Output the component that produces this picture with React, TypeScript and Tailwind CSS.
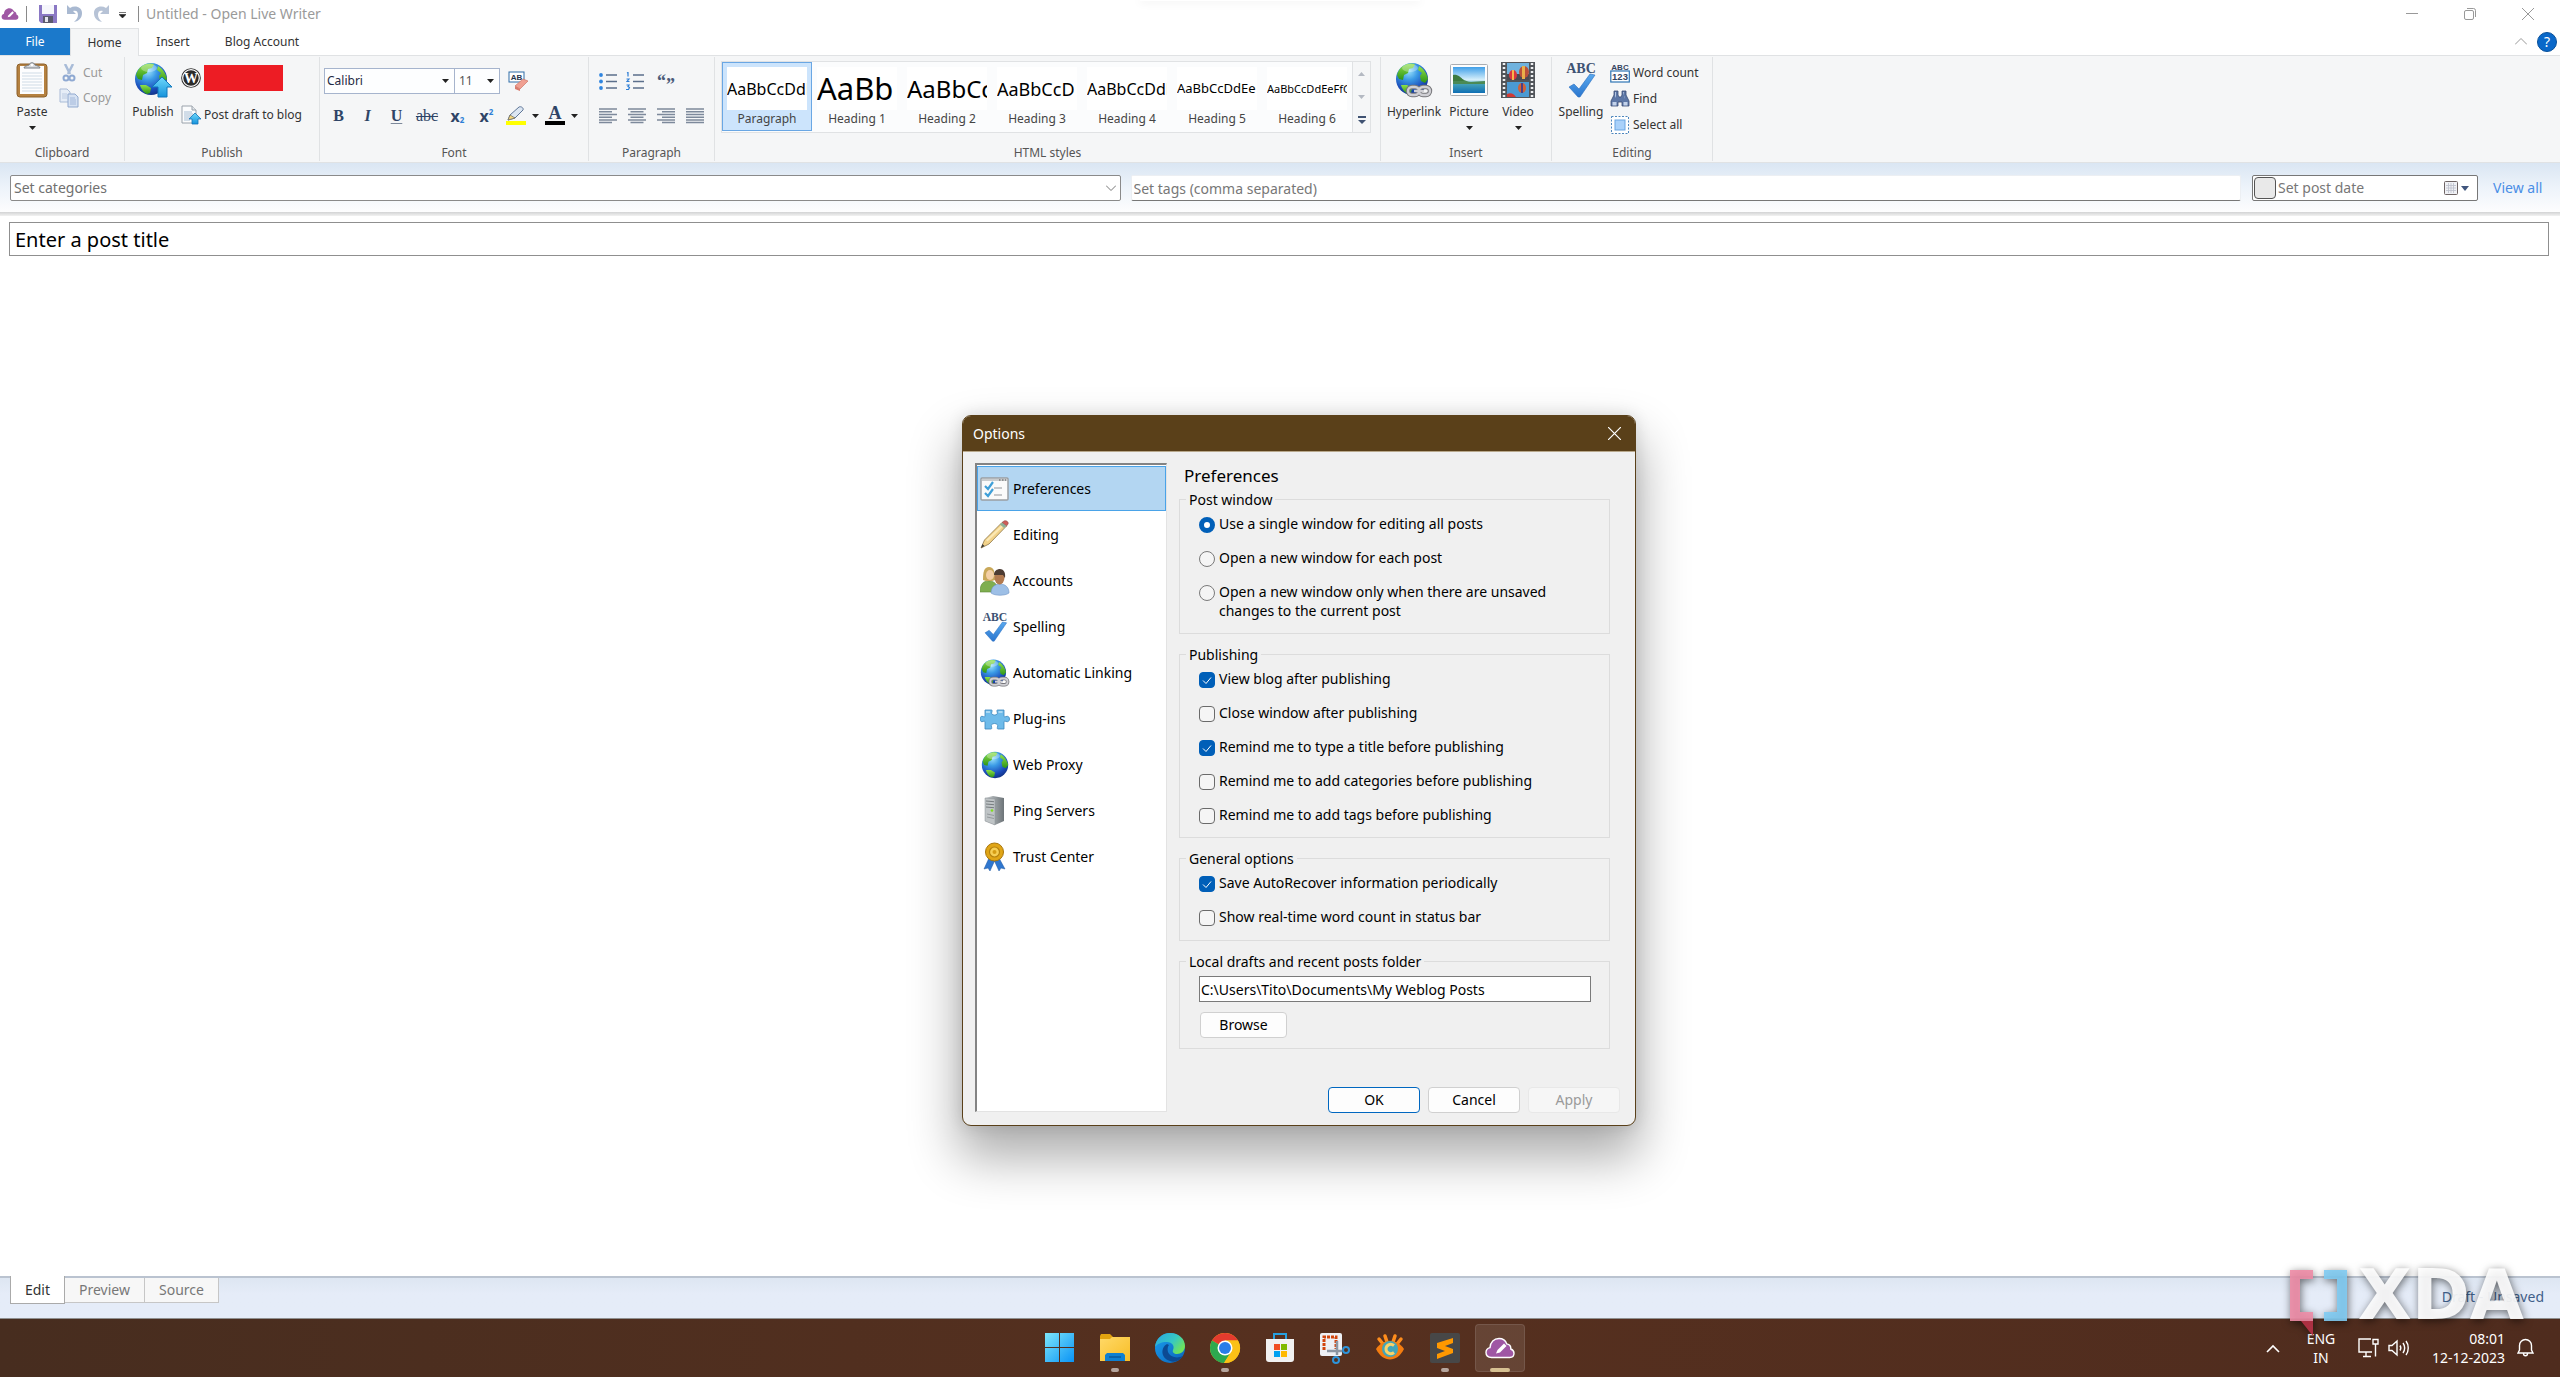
import { useState } from "react";
import type { ReactNode } from "react";

function Defs() {
  return (
    <svg className="absolute size-0" aria-hidden="true">
      <defs>
        <radialGradient id="sea" cx="0.4" cy="0.25" r="0.8">
          <stop offset="0" stopColor="#9fe4fb" />
          <stop offset="0.35" stopColor="#3b9be6" />
          <stop offset="0.75" stopColor="#1a49b8" />
          <stop offset="1" stopColor="#10307e" />
        </radialGradient>
        <linearGradient id="land" x1="0" y1="0" x2="0" y2="1">
          <stop offset="0" stopColor="#8fe04a" />
          <stop offset="1" stopColor="#2d9416" />
        </linearGradient>
        <linearGradient id="arrowBlue" x1="0" y1="0" x2="0" y2="1">
          <stop offset="0" stopColor="#6fd8fb" />
          <stop offset="1" stopColor="#1593dc" />
        </linearGradient>
        <linearGradient id="tick" x1="0" y1="0" x2="0" y2="1">
          <stop offset="0" stopColor="#5aa9ee" />
          <stop offset="1" stopColor="#2a76cf" />
        </linearGradient>
        <linearGradient id="win" x1="0" y1="0" x2="1" y2="1">
          <stop offset="0" stopColor="#7de6fb" />
          <stop offset="1" stopColor="#0a93f5" />
        </linearGradient>
        <linearGradient id="folder" x1="0" y1="0" x2="1" y2="1">
          <stop offset="0" stopColor="#ffd968" />
          <stop offset="1" stopColor="#f8bd25" />
        </linearGradient>
        <linearGradient id="edgeTop" x1="0" y1="0" x2="1" y2="0.6">
          <stop offset="0" stopColor="#2aa5e0" />
          <stop offset="0.6" stopColor="#36c8c4" />
          <stop offset="1" stopColor="#6fe35a" />
        </linearGradient>
        <linearGradient id="edgeLow" x1="0" y1="0" x2="1" y2="1">
          <stop offset="0" stopColor="#1a9ff0" />
          <stop offset="1" stopColor="#0b63b8" />
        </linearGradient>
        <linearGradient id="sky" x1="0" y1="0" x2="0" y2="1">
          <stop offset="0" stopColor="#3f9fe8" />
          <stop offset="0.5" stopColor="#d9f1fb" />
          <stop offset="0.62" stopColor="#4aa6b8" />
          <stop offset="1" stopColor="#0f6fb4" />
        </linearGradient>
        <linearGradient id="metal" x1="0" y1="0" x2="1" y2="0">
          <stop offset="0" stopColor="#c9ced1" />
          <stop offset="1" stopColor="#6d7478" />
        </linearGradient>
      </defs>
    </svg>
  );
}

function GlobeShape() {
  return (
    <>
      <circle cx="17" cy="17" r="16" fill="url(#sea)" />
      <path d="M8 4c4-3 9-3 12-2l-2 4-4 1-1 4-4 2-1 5-4-1-2-4c1-4 3-7 6-9z" fill="url(#land)" />
      <path d="M24 4c5 3 8 8 9 13l-3 4-4-2-1-5 2-3-4-3z" fill="url(#land)" />
      <path d="M6 23l6 0 5 3-1 5-3 1c-3-1-6-5-7-9z" fill="url(#land)" />
      <ellipse cx="15" cy="6" rx="8" ry="4" fill="#fff" opacity="0.3" />
    </>
  );
}

function Globe({ className }: { className: string }) {
  return (
    <svg className={className} viewBox="0 0 34 34" aria-hidden="true">
      <GlobeShape />
    </svg>
  );
}

function LinkedGlobe({ className }: { className: string }) {
  return (
    <svg className={className} viewBox="0 0 38 36" aria-hidden="true">
      <GlobeShape />
      <g fill="none" stroke="#77777b" strokeWidth="4.4">
        <rect x="13" y="25" width="11" height="8" rx="4" />
        <rect x="24" y="25" width="11" height="8" rx="4" />
      </g>
      <g fill="none" stroke="#cfcfd4" strokeWidth="2.4">
        <rect x="13" y="25" width="11" height="8" rx="4" />
        <rect x="24" y="25" width="11" height="8" rx="4" />
        <path d="M19 29h10" />
      </g>
    </svg>
  );
}

function PublishGlobe() {
  return (
    <svg className="h-9 w-[38px]" viewBox="0 0 38 36" aria-hidden="true">
      <GlobeShape />
      <path d="M28 15l10 10h-5v10h-9V25h-6z" fill="url(#arrowBlue)" stroke="#0f77bd" />
    </svg>
  );
}

function AbcTick({ className }: { className: string }) {
  return (
    <svg className={className} viewBox="0 0 32 36" aria-hidden="true">
      <text x="16" y="11" textAnchor="middle" fontFamily="Liberation Serif, serif" fontWeight="700" fontSize="14" fill="#3d5273">ABC</text>
      <path d="M4 25l5-3 5 5 11-15 5 1-15 22h-2z" fill="url(#tick)" stroke="#2a6fc0" strokeWidth="0.6" />
    </svg>
  );
}

function CloudMark({ className, ring }: { className: string; ring?: boolean }) {
  return (
    <svg className={className} viewBox="0 0 30 22" aria-hidden="true">
      <path
        d="M6.500 20.500C3 20.500 1 18.300 1 15.500c0-2.500 1.700-4.400 4-4.900C5.300 5.300 9 1.500 14 1.500c3.800 0 6.700 2.200 7.700 5.400 2.600.4 4.300 2.400 4.100 5.100 2 .8 3.200 2.500 3.200 4.300 0 2.500-1.800 4.200-4.200 4.200z"
        fill="#9f57a4"
        stroke={ring ? "#fff" : "none"}
        strokeWidth="1.400"
      />
      <path d="M11 16.500l1.500-3.500 6.500-6.500 2.500 2.500-6.500 6.500z" fill="#fff" />
    </svg>
  );
}

function Caret({ className = "" }: { className?: string }) {
  return (
    <svg className={"h-1 w-[7px] " + className} viewBox="0 0 7 4" aria-hidden="true">
      <path d="M0 0h7L3.500 4z" fill="#222" />
    </svg>
  );
}

function ClipboardIcon() {
  return (
    <svg className="h-9 w-8" viewBox="0 0 32 36" aria-hidden="true">
      <rect x="1" y="2" width="30" height="33" rx="3" fill="#b58140" stroke="#8d602a" />
      <rect x="4" y="4" width="24" height="28" fill="#fdfdfe" />
      <path d="M6 11h20M6 14h20M6 17h20M6 20h20M6 23h20M6 26h20M6 29h20" stroke="#cfdbe6" />
      <path d="M8 6c0-2 3-2 5-3 1-3 5-3 6 0 2 1 5 1 5 3z" fill="#d7dade" stroke="#777c82" />
      <circle cx="16" cy="3" r="1.300" fill="#fff" />
    </svg>
  );
}

function ScissorsIcon() {
  return (
    <svg className="h-[18px] w-5" viewBox="0 0 20 18" aria-hidden="true">
      <path d="M6 0l5 10M14 0L9 10" stroke="#a9bcd8" strokeWidth="2.500" />
      <circle cx="7" cy="14" r="2.500" fill="none" stroke="#8fa9d2" strokeWidth="2" />
      <circle cx="13" cy="14" r="2.500" fill="none" stroke="#8fa9d2" strokeWidth="2" />
    </svg>
  );
}

function CopyIcon() {
  return (
    <svg className="h-5 w-5" viewBox="0 0 20 20" aria-hidden="true">
      <path d="M1 1h7l3 3v10H1z" fill="#e6edf7" stroke="#a9bbd6" />
      <path d="M3 6h5M3 8h5M3 10h5" stroke="#bccbe2" />
      <path d="M9 6h7l3 3v10H9z" fill="#d5e1f2" stroke="#91a9cf" />
      <path d="M11 10h5M11 12h6M11 14h6M11 16h6" stroke="#a3b8da" />
    </svg>
  );
}

function WordPressIcon() {
  return (
    <svg className="size-5" viewBox="0 0 20 20" aria-hidden="true">
      <circle cx="10" cy="10" r="9.800" fill="#2b2b2b" />
      <circle cx="10" cy="10" r="8.300" fill="none" stroke="#fff" strokeWidth="1.200" />
      <text x="10" y="15" textAnchor="middle" fontFamily="Liberation Serif, serif" fontWeight="700" fontSize="14" fill="#fff">W</text>
    </svg>
  );
}

function DraftIcon() {
  return (
    <svg className="size-5" viewBox="0 0 20 20" aria-hidden="true">
      <path d="M1 1h10l4 4v13H1z" fill="#fbfcfd" stroke="#9aa2ab" />
      <path d="M11 1v4h4" fill="#e2e6ea" stroke="#9aa2ab" />
      <path d="M3 7h8M3 9h9M3 11h8M3 13h6M3 15h6" stroke="#a7bdd3" />
      <path d="M14 8l6 6h-3v5h-6v-5H8z" fill="url(#arrowBlue)" stroke="#1274b8" strokeWidth="0.800" />
    </svg>
  );
}

function ClearFormatIcon() {
  return (
    <svg className="size-5" viewBox="0 0 20 20" aria-hidden="true">
      <rect x="1" y="1" width="15" height="10" fill="#fff" stroke="#2e6da8" />
      <text x="8.500" y="9" textAnchor="middle" fontFamily="Liberation Sans, sans-serif" fontWeight="700" fontSize="8" fill="#27364f">AB</text>
      <path d="M7 15l8-7 5 2-8 8z" fill="#f0a092" stroke="#cf7567" strokeWidth="0.700" />
      <path d="M7 15l5 3v2l-5-2z" fill="#d97b6d" />
    </svg>
  );
}

function HighlighterIcon() {
  return (
    <svg className="size-5" viewBox="0 0 20 20" aria-hidden="true">
      <path d="M2 14l2-5L13 1c2-1 5 1 4 3L9 12z" fill="#dce6f2" stroke="#5f7697" />
      <path d="M2 14l2-5 5 3z" fill="#f4d77c" stroke="#6f6a5a" strokeWidth="0.700" />
      <rect y="15" width="20" height="4" fill="#ff0" />
    </svg>
  );
}

function FontColourIcon() {
  return (
    <svg className="size-5" viewBox="0 0 20 20" aria-hidden="true">
      <text x="10" y="13" textAnchor="middle" fontFamily="Liberation Serif, serif" fontWeight="700" fontSize="18" fill="#2f4466">A</text>
      <rect y="15" width="20" height="4" fill="#000" />
    </svg>
  );
}

function ListIcon({ numbered }: { numbered?: boolean }) {
  return (
    <svg className="size-[18px]" viewBox="0 0 18 18" aria-hidden="true">
      <path d="M7 3h11M7 9.500h11M7 16h11" stroke="#5b6f8c" strokeWidth="1.300" />
      {numbered ? (
        <path d="M1 1l1-.5v4M.500 7h2.500l-2 2.500h2.500M.500 13h2.500l-1 1.500 1.500 1-1 2H0" fill="none" stroke="#2f7fd6" strokeWidth="1.200" />
      ) : (
        <g fill="#2f85e0">
          <circle cx="2" cy="3" r="1.900" />
          <circle cx="2" cy="9.500" r="1.900" />
          <circle cx="2" cy="16" r="1.900" />
        </g>
      )}
    </svg>
  );
}

const ALIGN_PATHS: Record<string, string> = {
  left: "M0 1h18M0 6.500h18M0 12h18M0 3.800h13M0 9.200h13M0 14.500h13",
  center: "M0 1h18M0 6.500h18M0 12h18M2.500 3.800h13M2.500 9.200h13M2.500 14.500h13",
  right: "M0 1h18M0 6.500h18M0 12h18M5 3.800h13M5 9.200h13M5 14.500h13",
  justify: "M0 1h18M0 6.500h18M0 12h18M0 3.800h18M0 9.200h18M0 14.500h18",
};

function AlignIcon({ kind }: { kind: string }) {
  return (
    <svg className="h-4 w-[18px]" viewBox="0 0 18 16" aria-hidden="true">
      <path d={ALIGN_PATHS[kind]} stroke="#7d899b" strokeWidth="1.500" />
    </svg>
  );
}

function PictureIcon() {
  return (
    <svg className="h-9 w-[38px]" viewBox="0 0 38 36" aria-hidden="true">
      <rect x="0.500" y="2.500" width="37" height="31" rx="1" fill="#fdfdfd" stroke="#a9adb2" />
      <rect x="3" y="5" width="32" height="26" fill="url(#sky)" />
      <path d="M3 16c6-3 10 3 18 4l14-1v3H3z" fill="#4b8a55" />
      <path d="M3 13c4-1 8 2 11 6H3z" fill="#3d7a3f" />
    </svg>
  );
}

function VideoIcon() {
  return (
    <svg className="h-9 w-[34px]" viewBox="0 0 34 36" aria-hidden="true">
      <rect width="34" height="36" fill="#51555a" />
      <rect x="6" y="1" width="22" height="17" fill="#6fb2de" />
      <rect x="6" y="20" width="22" height="15" fill="#4b9ad2" />
      <path d="M6 12h22v6H6z" fill="#4b4a52" />
      <ellipse cx="12" cy="13" rx="4" ry="5" fill="#d8373e" />
      <path d="M11 8h2v10h-2z" fill="#f6b54a" />
      <ellipse cx="23" cy="10" rx="5" ry="6" fill="#b9503a" />
      <path d="M21 4h3v13h-3z" fill="#e8b04a" />
      <ellipse cx="21" cy="26" rx="4" ry="5" fill="#d06238" />
      <path d="M20 21h2v10h-2z" fill="#4d3f86" />
      <path d="M6 35v-3c4-2 7 0 9 3z" fill="#d03a35" />
      <path d="M3 1v34M31 1v34" stroke="#eef0f2" strokeWidth="2.500" strokeDasharray="2 2" />
    </svg>
  );
}

function WordCountIcon() {
  return (
    <svg className="size-5" viewBox="0 0 20 20" aria-hidden="true">
      <text x="10" y="6.500" textAnchor="middle" fontFamily="Liberation Sans, sans-serif" fontWeight="700" fontSize="8" fill="#33445f">ABC</text>
      <rect x="0.800" y="8" width="18.500" height="11" fill="#fff" stroke="#2e75b5" strokeWidth="1.200" />
      <text x="10" y="17" textAnchor="middle" fontFamily="Liberation Sans, sans-serif" fontWeight="700" fontSize="9.500" fill="#33445f">123</text>
    </svg>
  );
}

function BinocularsIcon() {
  return (
    <svg className="size-5" viewBox="0 0 20 20" aria-hidden="true">
      <path d="M4 2h4v4l1 2h2l1-2V2h4v4l3 6v5h-7v-4H8v4H1v-5l3-6z" fill="#5d77a6" stroke="#3a4d73" strokeWidth="0.800" />
      <path d="M2.500 13h4v3.500h-4zM13.500 13h4v3.500h-4z" fill="#c3d2ea" />
      <path d="M5 3h1v4l-1 2zM13 3h1v5l1 2z" fill="#b4c5e2" />
    </svg>
  );
}

function SelectAllIcon() {
  return (
    <svg className="size-5" viewBox="0 0 20 20" aria-hidden="true">
      <rect x="1.500" y="1.500" width="17" height="17" fill="#fff" stroke="#4e86bd" strokeDasharray="2 1.500" />
      <rect x="5" y="5" width="10" height="10" fill="#a9d1fa" stroke="#6aa6e2" />
    </svg>
  );
}

function PreferencesIcon() {
  return (
    <svg className="size-[30px]" viewBox="0 0 30 30" aria-hidden="true">
      <rect x="1" y="4" width="27" height="22" rx="1" fill="#fafafa" stroke="#9b9fa3" strokeWidth="1.500" />
      <path d="M2 6h25" stroke="#c9ccce" strokeWidth="2" />
      <path d="M19 6h1.500M22 6h1.500M25 6h1" stroke="#555" />
      <path d="M5 12l3 3 5-7M5 19l3 3 5-7" fill="none" stroke="#3f9fd8" strokeWidth="2.200" />
      <path d="M14 14h8M14 21h8" stroke="#b4b7bb" strokeWidth="1.500" />
    </svg>
  );
}

function PencilIcon() {
  return (
    <svg className="size-[30px]" viewBox="0 0 30 30" aria-hidden="true">
      <path d="M1 28l3.500-8L22 2.500l4.500 3.500L9 24z" fill="#f3d38a" stroke="#8b7445" strokeWidth="0.800" />
      <path d="M6 20L23 4l1.500 1L7.500 21.500z" fill="#fbe9b7" />
      <path d="M22 2.500l2-1.500c2-1 5 1 4 3l-1.500 2z" fill="#cf5d5a" stroke="#8c4845" strokeWidth="0.600" />
      <path d="M20 4.500l2-2 4.500 3.500L24 8z" fill="#8fb09a" />
      <path d="M1 28l1.500-4 2 2z" fill="#3a3a3a" />
    </svg>
  );
}

function PeopleIcon() {
  return (
    <svg className="size-[30px]" viewBox="0 0 30 30" aria-hidden="true">
      <path d="M0 26c0-8 3-11 9-11s9 4 9 11z" fill="#7fae4f" stroke="#5c8836" strokeWidth="0.600" />
      <path d="M3 14c0-8 1-13 6-13s6 5 6 13l-3 1H6z" fill="#c9a85a" />
      <ellipse cx="10" cy="9" rx="4" ry="5" fill="#f3cfa6" />
      <path d="M11 27c0-6 4-9 9-9s9 3 9 9c-4 3-14 3-18 0z" fill="#9dbfe6" stroke="#6e94c4" strokeWidth="0.600" />
      <ellipse cx="19.500" cy="11.500" rx="5" ry="7" fill="#b27a50" />
      <path d="M14 9c0-4 3-6 6-6s6 3 5 9l-2-3z" fill="#4d3c33" />
    </svg>
  );
}

function PuzzleIcon() {
  return (
    <svg className="size-[30px]" viewBox="0 0 30 30" aria-hidden="true">
      <path
        d="M5 6h6.500c.8 0 .8 1 .3 2C11 10 12.500 11 14.500 11s3.500-1 2.700-3c-.5-1-.5-2 .3-2H24v6c0 1 .8 1 2 .500 2-.8 3.500.5 3.500 2.500s-1.500 3.300-3.500 2.500c-1.200-.5-2-.5-2 .5v7h-6c-.8 0-1-1-.5-2 .8-2-.5-3.500-3-3.500s-3.800 1.500-3 3.500c.5 1 .3 2-.5 2H5v-7c0-1-.8-1-2-.5-1.700.8-3-.5-3-2.500s1.300-3.300 3-2.500c1.200.5 2 .5 2-.5z"
        fill="#6ebbea"
        stroke="#3a86bd"
        strokeWidth="0.800"
      />
      <path d="M6 8h4M18.500 8h4" stroke="#bfe3f8" strokeWidth="1.500" />
    </svg>
  );
}

function ServerIcon() {
  return (
    <svg className="size-[30px]" viewBox="0 0 30 30" aria-hidden="true">
      <path d="M5 2l8-2 11 2v23l-9 4-10-4z" fill="url(#metal)" />
      <path d="M5 2l10 1v26L5 25z" fill="#bfc4c6" stroke="#8b9194" strokeWidth="0.500" />
      <path d="M6 5l8 .700M6 8l8 .700M6 11l8 .700" stroke="#777d80" />
      <circle cx="12" cy="14.500" r="1.300" fill="#7fe01a" />
      <path d="M7 18l7 1.500M7 21l7 1.500" stroke="#94999c" />
    </svg>
  );
}

function MedalIcon() {
  return (
    <svg className="size-[30px]" viewBox="0 0 30 30" aria-hidden="true">
      <path d="M9 16L4 27l4-1 2 3 5-11zM19 16l6 11-4-1-2 3-5-11z" fill="#2f77cf" stroke="#1f56a0" strokeWidth="0.500" />
      <circle cx="14.500" cy="10" r="9" fill="#e0a516" stroke="#a8750a" />
      <circle cx="14.500" cy="10" r="5" fill="#f7cf55" stroke="#b5820e" strokeWidth="1.200" />
      <circle cx="14.500" cy="10" r="2" fill="#d59c14" />
    </svg>
  );
}

function Group({ label, className = "", children }: { label: string; className?: string; children: ReactNode }) {
  return (
    <section aria-label={label} className={"my-px flex h-[104px] flex-none flex-col border-r border-[#e0e2e4] pt-[3px] " + className}>
      <div className="flex flex-1 items-start">{children}</div>
      <h2 className="text-center text-xs leading-4 font-normal text-[#555]">{label}</h2>
    </section>
  );
}

function BigButton({ label, icon, menu, className }: { label: string; icon: ReactNode; menu?: boolean; className: string }) {
  return (
    <button className={"flex flex-col items-center " + className}>
      <span className="flex h-10 items-center">{icon}</span>
      <span className="mt-1 leading-4">{label}</span>
      {menu && <Caret className="mt-[6px]" />}
    </button>
  );
}

function SmallButton({ label, icon, className = "" }: { label: string; icon: ReactNode; className?: string }) {
  return (
    <button className={"flex h-[26px] items-center gap-[3px] whitespace-nowrap " + className}>
      {icon}
      <span>{label}</span>
    </button>
  );
}

const STYLES = [
  { name: "Paragraph", sample: "AaBbCcDdE", size: "text-base" },
  { name: "Heading 1", sample: "AaBb", size: "text-[31px]" },
  { name: "Heading 2", sample: "AaBbCc", size: "text-2xl" },
  { name: "Heading 3", sample: "AaBbCcD", size: "text-lg" },
  { name: "Heading 4", sample: "AaBbCcDdE", size: "text-base" },
  { name: "Heading 5", sample: "AaBbCcDdEe", size: "text-[13px]" },
  { name: "Heading 6", sample: "AaBbCcDdEeFfG", size: "text-[11px]" },
];

function TitleBar() {
  return (
    <header className="relative flex h-7 flex-none items-center pl-px text-[#9a9a9a]">
      <div className="absolute top-0 left-1/2 h-px w-[280px] -translate-x-1/2 shadow-[0_0_8px_rgba(0,0,0,0.25)]" />
      <CloudMark className="h-4 w-[18px]" />
      <span className="ml-[7px] h-4 w-px bg-[#8a8a8a]" />
      <button aria-label="Save" className="ml-3">
        <svg className="size-[18px]" viewBox="0 0 18 18" aria-hidden="true">
          <path d="M0 0h18v18H2l-2-2z" fill="#8a78c4" />
          <rect x="3" width="12" height="9" fill="#f5f6fb" />
          <rect x="4" y="11" width="10" height="7" fill="#5a5a6e" />
          <rect x="6" y="12" width="3" height="5" fill="#e5e6ee" />
        </svg>
      </button>
      <button aria-label="Undo" className="ml-[9px]">
        <svg className="size-[18px]" viewBox="0 0 18 18" aria-hidden="true">
          <path d="M1 0v9h9L7 6c3-1 5 0 5 4 0 3-2 5-4 7 5-1 8-4 8-9 0-6-7-8-12-5z" fill="#a9b9d1" />
        </svg>
      </button>
      <button aria-label="Redo" className="ml-2">
        <svg className="size-[18px]" viewBox="0 0 18 18" aria-hidden="true">
          <path d="M17 0v9H8l3-3c-3-1-5 0-5 4 0 3 2 5 4 7-5-1-8-4-8-9 0-6 7-8 12-5z" fill="#b7c3d6" />
        </svg>
      </button>
      <button aria-label="Customise toolbar" className="ml-[9px]">
        <svg className="mt-[2px] h-[6px] w-[7px]" viewBox="0 0 7 6" aria-hidden="true">
          <path d="M0 .500h7M0 2.500h7L3.500 6z" fill="#222" stroke="#222" strokeWidth="0.600" />
        </svg>
      </button>
      <span className="ml-3 h-4 w-px bg-[#8a8a8a]" />
      <h1 className="ml-[7px] text-sm">Untitled - Open Live Writer</h1>
      <div className="ml-auto flex h-full items-center gap-[46px] pr-[26px]">
        <button aria-label="Minimise"><svg className="size-3" viewBox="0 0 12 12"><path d="M0 5.500h12" stroke="#999" /></svg></button>
        <button aria-label="Restore">
          <svg className="size-3" viewBox="0 0 12 12" fill="none" stroke="#999">
            <rect x="0.500" y="2.500" width="9" height="9" rx="1.500" />
            <path d="M3 .500h6.500a2 2 0 0 1 2 2V9" />
          </svg>
        </button>
        <button aria-label="Close"><svg className="size-3" viewBox="0 0 12 12"><path d="M0 0l12 12M12 0L0 12" stroke="#999" /></svg></button>
      </div>
    </header>
  );
}

function RibbonTabs() {
  return (
    <nav className="flex h-[27px] flex-none text-xs text-[#333]">
      <button className="w-[70px] bg-[#1b79cb] text-white">File</button>
      <button className="relative z-10 -mb-px w-[69px] border-x border-t border-[#e0e2e4] bg-[#f5f6f7]">Home</button>
      <button className="w-[68px]">Insert</button>
      <button className="w-[110px]">Blog Account</button>
      <div className="ml-auto flex items-center gap-[10px] pr-[3px]">
        <button aria-label="Collapse ribbon">
          <svg className="h-[7px] w-3" viewBox="0 0 12 7"><path d="M0 6.500l6-6 6 6" fill="none" stroke="#999" /></svg>
        </button>
        <button aria-label="Help" className="size-5 rounded-full border border-[#08509a] bg-[#0a68c9] text-sm leading-[18px] text-white">?</button>
      </div>
    </nav>
  );
}

function Ribbon() {
  const formats = "flex h-6 w-[29px] items-center justify-center";
  return (
    <div className="flex h-[108px] flex-none overflow-hidden border-y border-[#e0e2e4] bg-[#f5f6f7] text-xs text-[#333]">
      <Group label="Clipboard" className="w-[125px]">
        <BigButton label="Paste" icon={<ClipboardIcon />} menu className="ml-3 w-10" />
        <div className="ml-[7px] flex flex-col text-[#999]">
          <button className="flex h-[25px] items-center gap-1"><ScissorsIcon />Cut</button>
          <button className="flex h-[25px] items-center gap-1"><CopyIcon />Copy</button>
        </div>
      </Group>
      <Group label="Publish" className="w-[195px]">
        <BigButton label="Publish" icon={<PublishGlobe />} className="ml-[6px] w-11" />
        <div className="ml-[6px] flex flex-col">
          <button aria-label="Select blog" className="mt-[5px] flex h-[26px] items-center gap-[3px]">
            <WordPressIcon />
            <span className="h-[26px] w-[79px] bg-[#ed1c24]" />
          </button>
          <SmallButton label="Post draft to blog" icon={<DraftIcon />} className="mt-[11px]" />
        </div>
      </Group>
      <Group label="Font" className="w-[269px]">
        <div className="flex flex-col pl-1">
          <div className="mt-[8px] flex h-[26px] items-center">
            <div className="relative h-[26px] w-[131px]">
              <select aria-label="Font" className="h-full w-full appearance-none border border-[#a6b4cd] bg-[#fdfeff] pl-[2px] text-[#1f2a44]"><option>Calibri</option></select>
              <Caret className="pointer-events-none absolute top-[11px] right-[6px]" />
            </div>
            <div className="relative -ml-px h-[26px] w-[46px]">
              <select aria-label="Font size" className="h-full w-full appearance-none border border-[#a6b4cd] bg-[#fdfeff] pl-1 text-[#555]"><option>11</option></select>
              <Caret className="pointer-events-none absolute top-[11px] right-[6px]" />
            </div>
            <button aria-label="Clear formatting" className="ml-2"><ClearFormatIcon /></button>
          </div>
          <div className="mt-[10px] flex h-6 items-center font-['Liberation_Serif',serif] text-base text-[#2f4466]">
            <button aria-label="Bold" className={formats + " font-bold"}>B</button>
            <button aria-label="Italic" className={formats + " font-bold italic"}>I</button>
            <button aria-label="Underline" className={formats + " font-bold underline decoration-[#7d899b] underline-offset-2"}>U</button>
            <button aria-label="Strikethrough" className="flex h-6 w-8 items-center justify-center line-through">abc</button>
            <button aria-label="Subscript" className={formats + " font-['Noto_Sans',sans-serif] font-bold"}>
              x<span className="mt-2 text-[8px] text-[#2f7fd6]">2</span>
            </button>
            <button aria-label="Superscript" className={formats + " font-['Noto_Sans',sans-serif] font-bold"}>
              x<span className="mb-2 text-[8px] text-[#2f7fd6]">2</span>
            </button>
            <button aria-label="Highlight colour" className="ml-[5px] flex items-center gap-[6px]"><HighlighterIcon /><Caret /></button>
            <button aria-label="Font colour" className="ml-[6px] flex items-center gap-[6px]"><FontColourIcon /><Caret /></button>
          </div>
        </div>
      </Group>
      <Group label="Paragraph" className="w-[126px]">
        <div className="flex flex-col pl-[10px]">
          <div className="mt-[8px] flex h-[26px] items-center gap-[9px]">
            <button aria-label="Bullets"><ListIcon /></button>
            <button aria-label="Numbering"><ListIcon numbered /></button>
            <button aria-label="Block quote" className="ml-1 flex h-6 font-['Liberation_Serif',serif] text-lg leading-6 font-bold text-[#4a5b78]">
              “<span className="mt-1">”</span>
            </button>
          </div>
          <div className="mt-[10px] flex h-6 items-center gap-[11px]">
            <button aria-label="Align left"><AlignIcon kind="left" /></button>
            <button aria-label="Align centre"><AlignIcon kind="center" /></button>
            <button aria-label="Align right"><AlignIcon kind="right" /></button>
            <button aria-label="Justify"><AlignIcon kind="justify" /></button>
          </div>
        </div>
      </Group>
      <Group label="HTML styles" className="w-[666px]">
        <div className="mt-px ml-[6px] flex h-[72px] border border-[#e0e2e4]">
          <div className="flex bg-[#fbfcfd]">
            {STYLES.map((s, i) => (
              <button
                key={s.name}
                className={
                  "flex h-[69px] w-[90px] flex-col items-center border p-1 " +
                  (i === 0 ? "border-[#6aa7e4] bg-[#cce4fc]" : "border-transparent")
                }
              >
                <span className="flex h-[43px] w-20 flex-none items-center overflow-hidden bg-white text-black">
                  <span className={"whitespace-nowrap leading-none " + s.size}>{s.sample}</span>
                </span>
                <span className="mt-[1px] leading-4 text-[#444]">{s.name}</span>
              </button>
            ))}
          </div>
          <div className="flex w-[18px] flex-col border-l border-[#e0e2e4]">
            <button aria-label="Scroll up" className="flex flex-1 items-center justify-center">
              <svg className="h-1 w-[7px]" viewBox="0 0 7 4"><path d="M0 4h7L3.500 0z" fill="#b4b9c2" /></svg>
            </button>
            <button aria-label="Scroll down" className="flex flex-1 items-center justify-center">
              <svg className="h-1 w-[7px]" viewBox="0 0 7 4"><path d="M0 0h7L3.500 4z" fill="#b4b9c2" /></svg>
            </button>
            <button aria-label="More styles" className="flex flex-1 items-center justify-center">
              <svg className="h-2 w-2" viewBox="0 0 8 8"><path d="M0 0h8v2H0zM0 4h8L4 8z" fill="#3f5272" /></svg>
            </button>
          </div>
        </div>
      </Group>
      <Group label="Insert" className="w-[171px]">
        <BigButton label="Hyperlink" icon={<LinkedGlobe className="h-9 w-[38px]" />} className="ml-1 w-[58px]" />
        <BigButton label="Picture" icon={<PictureIcon />} menu className="w-[52px]" />
        <BigButton label="Video" icon={<VideoIcon />} menu className="w-[46px]" />
      </Group>
      <Group label="Editing" className="w-[161px]">
        <BigButton label="Spelling" icon={<AbcTick className="h-9 w-8" />} className="ml-1 w-[50px]" />
        <div className="ml-1 flex flex-col">
          <SmallButton label="Word count" icon={<WordCountIcon />} />
          <SmallButton label="Find" icon={<BinocularsIcon />} />
          <SmallButton label="Select all" icon={<SelectAllIcon />} />
        </div>
      </Group>
    </div>
  );
}

function PostProperties() {
  return (
    <div className="flex h-[49px] flex-none items-start bg-linear-to-b from-[#dae6f3] via-[#edf3fa] to-[#fdfdfe] pt-3 pr-4 pl-[10px] text-sm text-[#707070]">
      <div className="relative flex-1">
        <select aria-label="Categories" className="block h-[26px] w-full appearance-none rounded-[2px] border border-[#8a8a8a] bg-white pl-[3px]">
          <option>Set categories</option>
        </select>
        <svg className="pointer-events-none absolute top-[10px] right-[5px] h-[6px] w-[10px]" viewBox="0 0 10 6"><path d="M0 .500l5 5 5-5" fill="none" stroke="#777" /></svg>
      </div>
      <div className="ml-[10px] flex-1">
        <input aria-label="Tags" placeholder="Set tags (comma separated)" className="block h-[26px] w-full rounded-[2px] border border-[#eceff3] border-b-[#777] bg-white pl-[2px] placeholder:text-[#777]" />
      </div>
      <div className="ml-[11px] flex h-[26px] w-[226px] items-center rounded-[2px] border border-[#777] bg-white pl-px">
        <input type="checkbox" aria-label="Use post date" className="size-[22px] flex-none appearance-none rounded-[4px] border border-[#555] bg-[#e9e9e9]" />
        <input aria-label="Post date" placeholder="Set post date" className="ml-[2px] w-0 flex-1 placeholder:text-[#777]" />
        <button aria-label="Open calendar" className="flex items-center gap-[3px] pr-2">
          <svg className="size-[14px]" viewBox="0 0 14 14"><rect x="0.500" y="0.500" width="13" height="13" rx="1" fill="#f0f1f5" stroke="#6e6464" /><path d="M2 4.500h10M2 7h10M2 9.500h10M4.500 2v10M7 2v10M9.500 2v10" stroke="#bcc0cc" strokeWidth="0.800" /></svg>
          <svg className="h-[5px] w-2" viewBox="0 0 8 5"><path d="M0 0h8L4 5z" fill="#41567e" /></svg>
        </button>
      </div>
      <a href="#" className="ml-[15px] w-[51px] leading-[26px] whitespace-nowrap text-[#4a8ee6]">View all</a>
    </div>
  );
}

const PAGES: { name: string; icon: ReactNode }[] = [
  { name: "Preferences", icon: <PreferencesIcon /> },
  { name: "Editing", icon: <PencilIcon /> },
  { name: "Accounts", icon: <PeopleIcon /> },
  { name: "Spelling", icon: <AbcTick className="size-[30px]" /> },
  { name: "Automatic Linking", icon: <LinkedGlobe className="size-[30px]" /> },
  { name: "Plug-ins", icon: <PuzzleIcon /> },
  { name: "Web Proxy", icon: <Globe className="size-[28px]" /> },
  { name: "Ping Servers", icon: <ServerIcon /> },
  { name: "Trust Center", icon: <MedalIcon /> },
];

function OptionGroup({ title, className, children }: { title: string; className: string; children: ReactNode }) {
  return (
    <fieldset className={"relative min-w-0 border border-[#dcdcdc] pt-[14px] pr-[18px] pl-[19px] " + className}>
      <legend className="absolute -top-[10px] left-[6px] bg-[#f0f0f0] px-[3px] leading-5">{title}</legend>
      {children}
    </fieldset>
  );
}

function RadioRow({ label, defaultChecked }: { label: string; defaultChecked?: boolean }) {
  return (
    <label className="mb-[15px] flex items-start gap-1 leading-[19px]">
      <input
        type="radio"
        name="post-window"
        defaultChecked={defaultChecked}
        className="mt-[3px] size-4 flex-none appearance-none rounded-full border border-[#7a7a7a] bg-[#f5f5f5] checked:border-[5px] checked:border-[#005fb8] checked:bg-white"
      />
      <span className="max-w-[340px]">{label}</span>
    </label>
  );
}

function CheckRow({ label, defaultChecked }: { label: string; defaultChecked?: boolean }) {
  const [on, setOn] = useState(!!defaultChecked);
  return (
    <label className="mb-[15px] flex items-start gap-1 leading-[19px] last:mb-0">
      <span className="relative mt-[3px] size-4 flex-none">
        <input
          type="checkbox"
          checked={on}
          onChange={(e) => setOn(e.target.checked)}
          className="block size-4 appearance-none rounded-[4px] border border-[#6a6a6a] bg-[#f5f5f5] checked:border-[#005fb8] checked:bg-[#005fb8]"
        />
        {on && (
          <svg className="pointer-events-none absolute inset-0 size-4" viewBox="0 0 16 16"><path d="M4 8.500l3 3 5-6" fill="none" stroke="#fff" /></svg>
        )}
      </span>
      <span>{label}</span>
    </label>
  );
}

function OptionsDialog() {
  const push = "rounded-[4px] border border-[#d0d0d0] bg-[#fdfdfd]";
  return (
    <div role="dialog" aria-label="Options" className="absolute top-[415px] left-[calc(50%-318px)] w-[674px] overflow-hidden rounded-[9px] border border-[#5a4019] bg-[#f0f0f0] text-sm text-black shadow-[0_28px_50px_4px_rgba(0,0,0,0.32),0_0_16px_rgba(0,0,0,0.12)]">
      <header className="flex h-9 items-center justify-between border-b border-[#b8a88c] bg-[#5a4019] pr-[14px] pl-[10px] text-white">
        <h2>Options</h2>
        <button aria-label="Close"><svg className="size-[13px]" viewBox="0 0 13 13"><path d="M0 0l13 13M13 0L0 13" stroke="#fff" strokeWidth="1.200" /></svg></button>
      </header>
      <div className="flex pt-[11px] pl-3">
        <ul className="h-[649px] w-[192px] flex-none border-t-2 border-l-2 border-r border-b border-t-[#838383] border-r-[#e3e3e3] border-b-[#e3e3e3] border-l-[#838383] bg-white pt-px">
          {PAGES.map((p, i) => (
            <li key={p.name} className="h-[46px]">
              <button className={"flex h-[45px] w-full items-center gap-[3px] border pl-[2px] " + (i === 0 ? "border-[#4aa3e8] bg-[#b3d6f2]" : "border-transparent")}>
                <span className="flex w-[30px] justify-center">{p.icon}</span>
                <span>{p.name}</span>
              </button>
            </li>
          ))}
        </ul>
        <div className="ml-3 w-[431px]">
          <h3 className="pl-[5px] text-[17px] leading-[26px]">Preferences</h3>
          <OptionGroup title="Post window" className="mt-[10px] h-[135px]">
            <RadioRow label="Use a single window for editing all posts" defaultChecked />
            <RadioRow label="Open a new window for each post" />
            <RadioRow label="Open a new window only when there are unsaved changes to the current post" />
          </OptionGroup>
          <OptionGroup title="Publishing" className="mt-5 h-[184px]">
            <CheckRow label="View blog after publishing" defaultChecked />
            <CheckRow label="Close window after publishing" />
            <CheckRow label="Remind me to type a title before publishing" defaultChecked />
            <CheckRow label="Remind me to add categories before publishing" />
            <CheckRow label="Remind me to add tags before publishing" />
          </OptionGroup>
          <OptionGroup title="General options" className="mt-5 h-[83px]">
            <CheckRow label="Save AutoRecover information periodically" defaultChecked />
            <CheckRow label="Show real-time word count in status bar" />
          </OptionGroup>
          <OptionGroup title="Local drafts and recent posts folder" className="mt-5 h-[88px]">
            <input aria-label="Local drafts and recent posts folder" defaultValue="C:\Users\Tito\Documents\My Weblog Posts" className="block h-[26px] w-full border border-[#7a7a7a] bg-white pl-px" />
            <button className={push + " mt-[10px] ml-px h-[26px] w-[87px]"}>Browse</button>
          </OptionGroup>
        </div>
      </div>
      <footer className="-mt-[25px] flex justify-end gap-2 pr-[15px] pb-3">
        <button className="h-[26px] w-[92px] rounded-[4px] border border-[#0067c0] bg-[#fdfdfd]">OK</button>
        <button className={push + " h-[26px] w-[92px]"}>Cancel</button>
        <button disabled className="h-[26px] w-[92px] rounded-[4px] border border-[#e8e8e8] bg-[#f6f6f6] text-[#9a9a9a]">Apply</button>
      </footer>
    </div>
  );
}

function StatusBar() {
  return (
    <div className="relative flex h-[43px] flex-none items-start border-t-2 border-b border-t-[#bac3d0] border-b-[#8f8f8f] bg-linear-to-b from-[#dde6f2] to-[#e5ecf8] to-40% pr-4 pl-[10px] text-sm text-[#777]">
      <button className="-mt-[2px] h-7 w-[55px] border-x border-b border-[#aaa] bg-white text-[#333]">Edit</button>
      <button className="h-[25px] w-20 border-r border-b border-[#c6c6c6] bg-[#f7f7f7]">Preview</button>
      <button className="h-[25px] w-[74px] border-r border-b border-[#c6c6c6] bg-[#f7f7f7]">Source</button>
      <span className="ml-auto leading-[38px] text-[#41608a]">Draft - Unsaved</span>
      <Watermark />
    </div>
  );
}

function Watermark() {
  return (
    <div className="pointer-events-none absolute -top-[10px] right-9 z-10 flex h-[72px] items-start drop-shadow-[1px_2px_4px_rgba(0,0,0,0.6)]">
      <svg className="h-[68px] w-[58px]" viewBox="0 0 58 68" aria-hidden="true">
        <path d="M0 2h23v9H10v33h13v9H0z" fill="#ee8ca6" opacity="0.900" />
        <path d="M11 53h12v15z" fill="#b93348" opacity="0.900" />
        <path d="M34 2h23v51H34v-9h13V11H34z" fill="#7fcbf2" opacity="0.900" />
      </svg>
      <span className="ml-[10px] font-['DejaVu_Sans',sans-serif] text-[70px] leading-[55px] font-bold text-white/90">XDA</span>
    </div>
  );
}

const APPS: { name: string; state?: "running" | "active"; icon: ReactNode }[] = [
  { name: "Start", icon: <path d="M0 0h14v14H0zM15 0h14v14H15zM0 15h14v14H0zM15 15h14v14H15z" fill="url(#win)" /> },
  {
    name: "File Explorer",
    state: "running",
    icon: (
      <>
        <path d="M0 3l1-2h9l3 3v8H0z" fill="#e2a30f" />
        <path d="M0 6h10l2-2h18v24H0z" fill="url(#folder)" />
        <path d="M5 28v-6l2-2h16l2 2v6z" fill="#1080d0" />
        <path d="M9 24h12" stroke="#0a5a9c" strokeWidth="1.500" />
      </>
    ),
  },
  {
    name: "Edge",
    icon: (
      <>
        <circle cx="15" cy="15" r="15" fill="url(#edgeLow)" />
        <path d="M0 14C1 5 8 0 15 0c9 0 15 6 15 13 0 5-4 8-8 8-3 0-5-2-4-4 2-4-1-8-6-8C6 9 2 11 0 14z" fill="url(#edgeTop)" />
        <path d="M12 11c-6 3-7 14 3 17 5 2 10-1 13-5-6 3-13 1-15-4-1-3 0-6 1-7z" fill="#0c4a93" />
      </>
    ),
  },
  {
    name: "Chrome",
    state: "running",
    icon: (
      <>
        <circle cx="15" cy="15" r="15" fill="#fbc116" />
        <path d="M15 15L2 7.500A15 15 0 0 1 28 7.500H15z" fill="#e33b2e" />
        <path d="M15 15L2 7.500A15 15 0 0 0 14 30l7.500-12z" fill="#2da94f" />
        <path d="M15 7.500h13A15 15 0 0 1 14 30l7.500-11.500z" fill="#fbc116" />
        <circle cx="15" cy="15" r="7.500" fill="#fff" />
        <circle cx="15" cy="15" r="6" fill="#2a7de9" />
      </>
    ),
  },
  {
    name: "Microsoft Store",
    icon: (
      <>
        <path d="M9 7V1h12v6" fill="none" stroke="#27a0e0" strokeWidth="2" />
        <path d="M1 6h28v20c0 2-1 3-3 3H4c-2 0-3-1-3-3z" fill="#f1f1f1" />
        <path d="M9 11h6v6H9z" fill="#f04e23" />
        <path d="M16 11h6v6h-6z" fill="#7fba00" />
        <path d="M9 18h6v6H9z" fill="#00a1f1" />
        <path d="M16 18h6v6h-6z" fill="#ffb900" />
      </>
    ),
  },
  {
    name: "Snipping Tool",
    icon: (
      <>
        <rect width="22" height="23" rx="2" fill="#eef0f4" />
        <path d="M4 17V4h12v12" fill="none" stroke="#d1440c" strokeWidth="3" strokeDasharray="3 1" />
        <path d="M17 8v14M7 18h15" stroke="#8c96a3" strokeWidth="2.500" />
        <circle cx="26" cy="17" r="3" fill="none" stroke="#2d94da" strokeWidth="2" />
        <circle cx="16" cy="27" r="3" fill="none" stroke="#2d94da" strokeWidth="2" />
      </>
    ),
  },
  {
    name: "XnView",
    icon: (
      <>
        <path d="M4 6l4 5M10 3l2 6M20 3l-2 6M26 6l-4 5" stroke="#ff8d1c" strokeWidth="3.500" strokeLinecap="round" />
        <path d="M1 16c7-11 21-11 28 0-7 14-21 14-28 0z" fill="#f47d10" />
        <circle cx="15" cy="16" r="8" fill="#42a5b8" />
        <path d="M19 12.500c-4-3-8 0-8 3.500s4 6.500 8 3.500" fill="none" stroke="#f8d36a" strokeWidth="3" />
      </>
    ),
  },
  {
    name: "Sublime Text",
    state: "running",
    icon: (
      <>
        <rect width="30" height="30" rx="2" fill="#474747" />
        <path d="M7 10l16-5v5l-8 3 8 3v4L7 26v-5l8-3-8-3z" fill="#ff9800" />
      </>
    ),
  },
  { name: "Open Live Writer", state: "active", icon: null },
];

function Taskbar() {
  return (
    <footer className="grid h-[58px] flex-none grid-cols-[1fr_auto_1fr] items-center bg-linear-to-r from-[#472d1f] via-[#56301f] to-[#4f2c1e] text-white">
      <div />
      <div className="flex gap-[5px]">
        {APPS.map((a) => (
          <button
            key={a.name}
            aria-label={a.name}
            className={"relative flex h-12 w-[50px] items-center justify-center rounded-[4px] " + (a.state === "active" ? "border border-white/10 bg-white/10" : "")}
          >
            {a.state === "active" ? (
              <CloudMark ring className="h-[22px] w-[30px]" />
            ) : (
              <svg className="size-[30px] overflow-visible" viewBox="0 0 30 30" aria-hidden="true">{a.icon}</svg>
            )}
            {a.state === "running" && <span className="absolute bottom-0 h-1 w-2 rounded-full bg-[#b5a59d]" />}
            {a.state === "active" && <span className="absolute -bottom-px h-1 w-5 rounded-full bg-[#d6c091]" />}
          </button>
        ))}
      </div>
      <div className="flex items-center justify-end pr-[26px] text-sm leading-[19px]">
        <button aria-label="Show hidden icons">
          <svg className="h-[9px] w-[14px]" viewBox="0 0 14 9"><path d="M1 8l6-6 6 6" fill="none" stroke="#fff" strokeWidth="1.600" /></svg>
        </button>
        <button aria-label="Language" className="ml-6 w-[34px] text-center">ENG<br />IN</button>
        <button aria-label="Network" className="ml-5">
          <svg className="h-5 w-[21px]" viewBox="0 0 21 20" fill="none" stroke="#fff" strokeWidth="1.400">
            <path d="M13 1H1v13h13M5 18.500h8M8 14v4" />
            <path d="M15 1.500h5V6h-5zM17.500 6v12.500" />
          </svg>
        </button>
        <button aria-label="Volume" className="ml-[9px]">
          <svg className="h-[18px] w-[21px]" viewBox="0 0 21 18" fill="none" stroke="#fff" strokeWidth="1.400">
            <path d="M1 6.500h3L9 2v14l-5-4.500H1z" />
            <path d="M12 6.500c1 1.500 1 3.500 0 5M15 4c2 3 2 7 0 10M18 2c3 4 3 10 0 14" />
          </svg>
        </button>
        <div className="ml-[18px] w-[78px] text-right">08:01<br />12-12-2023</div>
        <button aria-label="Notifications" className="ml-3">
          <svg className="h-5 w-[17px]" viewBox="0 0 17 20" fill="none" stroke="#fff" strokeWidth="1.400">
            <path d="M1 15l1.500-3V7.500a6 6 0 0 1 12 0V12l1.500 3zM6.500 15.500c0 3 4 3 4 0" />
          </svg>
        </button>
      </div>
    </footer>
  );
}

export default function App() {
  return (
    <div className="relative flex h-screen flex-col overflow-hidden bg-white font-['Noto_Sans','Open_Sans',sans-serif]">
      <Defs />
      <TitleBar />
      <RibbonTabs />
      <Ribbon />
      <PostProperties />
      <div className="h-1 flex-none bg-linear-to-b from-[#d2d3d4] to-[#f2f2f2]" />
      <main className="flex flex-1 flex-col pt-[6px] pr-[11px] pl-[9px]">
        <input aria-label="Post title" placeholder="Enter a post title" className="h-[34px] w-full border border-[#8f8f8f] pl-[5px] text-xl placeholder:text-black" />
        <div className="flex-1" contentEditable suppressContentEditableWarning aria-label="Post body" role="textbox" />
      </main>
      <StatusBar />
      <Taskbar />
      <OptionsDialog />
    </div>
  );
}
